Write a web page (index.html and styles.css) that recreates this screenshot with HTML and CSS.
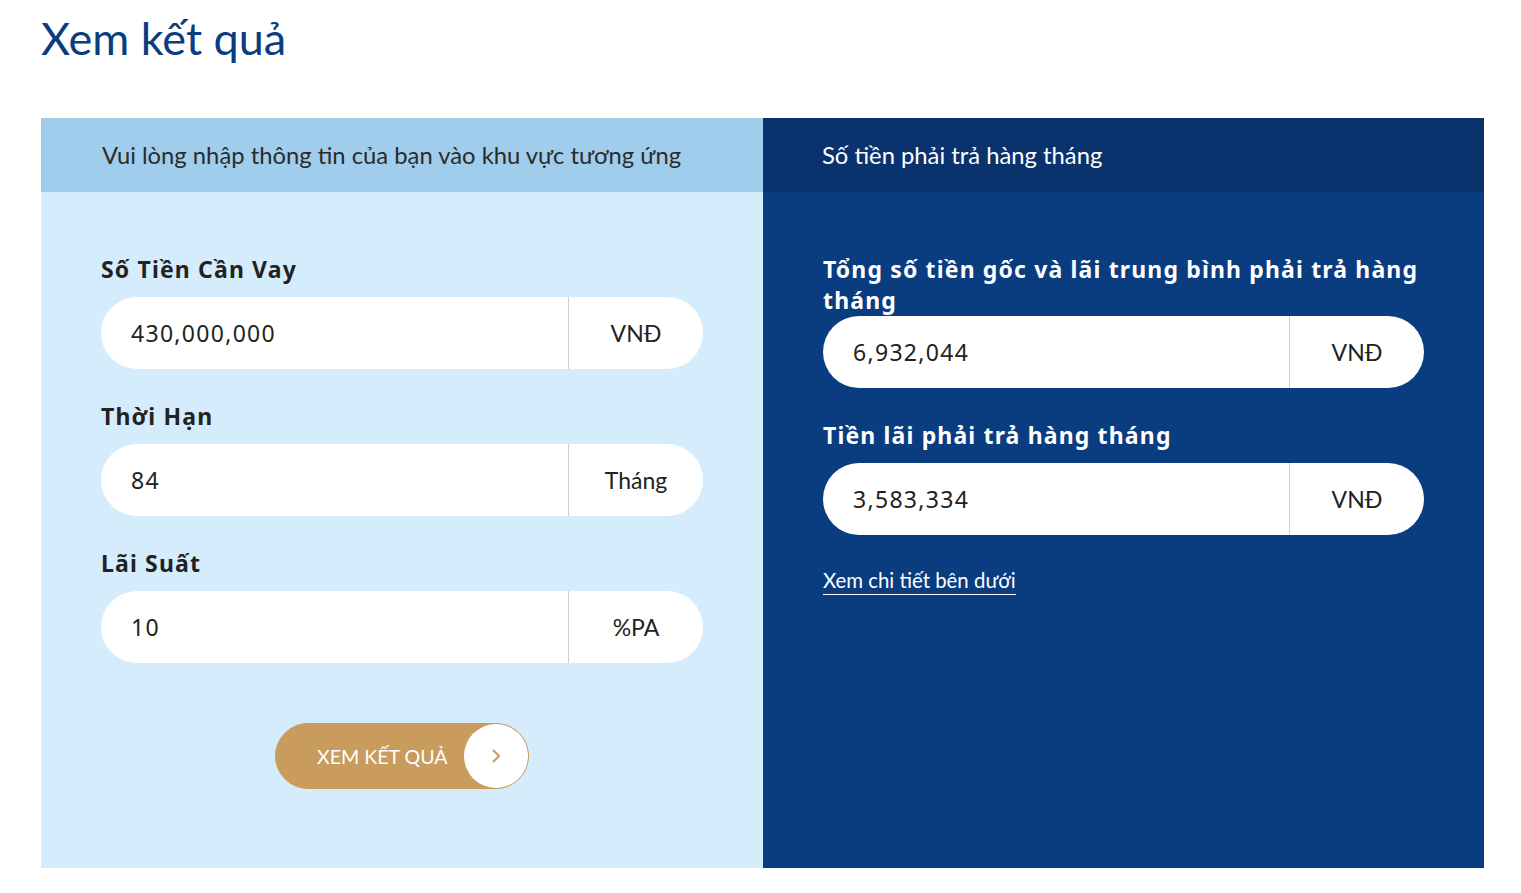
FILE: index.html
```html
<!DOCTYPE html>
<html lang="vi">
<head>
<meta charset="utf-8">
<title>Xem kết quả</title>
<link rel="stylesheet" href="styles.css">
</head>
<body>
<div class="page">
  <h1 class="title">Xem kết quả</h1>
  <div class="calc">
    <section class="col col-left">
      <div class="head head-left">Vui lòng nhập thông tin của bạn vào khu vực tương ứng</div>
      <div class="body body-left">
        <div class="field">
          <div class="label">Số Tiền Cần Vay</div>
          <div class="input"><span class="val">430,000,000</span><span class="unit">VNĐ</span></div>
        </div>
        <div class="field">
          <div class="label">Thời Hạn</div>
          <div class="input"><span class="val">84</span><span class="unit">Tháng</span></div>
        </div>
        <div class="field">
          <div class="label">Lãi Suất</div>
          <div class="input"><span class="val">10</span><span class="unit">%PA</span></div>
        </div>
        <div class="btn-wrap">
          <button class="btn"><span class="btn-text">XEM KẾT QUẢ</span><span class="btn-circle"><svg width="14" height="18" viewBox="0 0 14 18"><path d="M4 3 L10 9 L4 15" fill="none" stroke="#c99b5c" stroke-width="2"/></svg></span></button>
        </div>
      </div>
    </section>
    <section class="col col-right">
      <div class="head head-right">Số tiền phải trả hàng tháng</div>
      <div class="body body-right">
        <div class="field">
          <div class="label label-light label-tight">Tổng số tiền gốc và lãi trung bình phải trả hàng tháng</div>
          <div class="input"><span class="val">6,932,044</span><span class="unit">VNĐ</span></div>
        </div>
        <div class="field">
          <div class="label label-light">Tiền lãi phải trả hàng tháng</div>
          <div class="input"><span class="val">3,583,334</span><span class="unit">VNĐ</span></div>
        </div>
        <a class="link" href="#">Xem chi tiết bên dưới</a>
      </div>
    </section>
  </div>
</div>
</body>
</html>
```
FILE: styles.css
```css
* { box-sizing: border-box; }
body { margin: 0; background: #fff; font-family: "Noto Sans", "Open Sans", sans-serif; }
.page { padding: 0 37px 0 41px; }
.title {
  margin: 0;
  padding-top: 10px;
  height: 118px;
  font-family: "Lato", sans-serif;
  font-weight: 400;
  font-size: 45px;
  line-height: 56px;
  color: #0a3c80;
}
.calc { display: grid; grid-template-columns: 722px 721px; height: 750px; }
.col { display: flex; flex-direction: column; }
.head {
  height: 74px;
  display: flex;
  align-items: center;
  padding-left: 61px;
  font-family: "Lato", sans-serif;
  font-size: 23.8px;
}
.head-left { background: #a1cdec; color: #2b2b2b; }
.head-right { background: #0a326d; color: #fff; padding-left: 59px; }
.body { flex: 1; }
.body-left { background: #d5ecfc; padding: 62px 60px 0 60px; }
.body-right { background: #0a3c80; padding: 62px 60px 0 60px; }
.field { margin-bottom: 32px; }
.label {
  font-weight: 700;
  font-size: 23px;
  line-height: 31px;
  letter-spacing: 1.15px;
  color: #222;
  margin-bottom: 12px;
}
.label-light { color: #fff; }
.label-tight { margin-bottom: 0; }
.input {
  display: flex;
  height: 72px;
  background: #fff;
  border-radius: 36px;
  align-items: stretch;
}
.val {
  flex: 1;
  display: flex;
  align-items: center;
  padding-left: 30px;
  font-size: 23px;
  letter-spacing: 1.3px;
  color: #222;
}
.unit {
  width: 135px;
  border-left: 1px solid #cfcfcf;
  display: flex;
  align-items: center;
  justify-content: center;
  font-family: "Lato", sans-serif;
  font-size: 23px;
  color: #222;
}
.btn-wrap { display: flex; padding-left: 174px; margin-top: 60px; }
.btn {
  display: flex;
  align-items: center;
  width: 254px;
  height: 66px;
  padding: 0;
  border: 1px solid #c99b5c;
  border-radius: 33px;
  background: #c99b5c;
  cursor: pointer;
}
.btn-text {
  flex: 1;
  padding-left: 41px;
  text-align: left;
  font-family: "Lato", sans-serif;
  font-size: 19.6px;
  color: #fff;
}
.btn-circle {
  width: 64px;
  height: 64px;
  border-radius: 50%;
  background: #fff;
  display: flex;
  align-items: center;
  justify-content: center;
}
.link {
  display: inline-block;
  margin-top: 0;
  font-family: "Lato", sans-serif;
  font-size: 20.4px;
  color: #fff;
  text-decoration: none;
  border-bottom: 1.5px solid #fff;
  line-height: 27px;
}
```
